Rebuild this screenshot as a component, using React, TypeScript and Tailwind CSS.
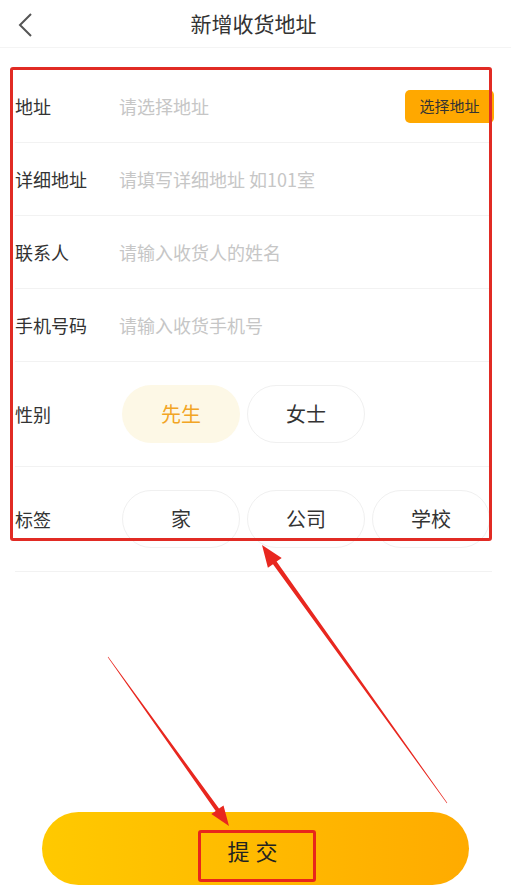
import type { ReactNode } from 'react';

const font = { fontFamily: '"Noto Sans CJK SC", "Noto Sans", sans-serif' };

// Tapered annotation arrow: thin at the tail, wide near the head.
function arrowPoints(tx: number, ty: number, hx: number, hy: number, tail: number, neck: number, headW: number, headL: number) {
  const dx = hx - tx;
  const dy = hy - ty;
  const len = Math.hypot(dx, dy);
  const ux = dx / len;
  const uy = dy / len;
  const nx = -uy;
  const ny = ux;
  const bx = hx - ux * headL;
  const by = hy - uy * headL;
  const pts = [
    [tx + (nx * tail) / 2, ty + (ny * tail) / 2],
    [bx + (nx * neck) / 2, by + (ny * neck) / 2],
    [bx + (nx * headW) / 2, by + (ny * headW) / 2],
    [hx, hy],
    [bx - (nx * headW) / 2, by - (ny * headW) / 2],
    [bx - (nx * neck) / 2, by - (ny * neck) / 2],
    [tx - (nx * tail) / 2, ty - (ny * tail) / 2],
  ];
  return pts.map((p) => p.map((v) => v.toFixed(1)).join(',')).join(' ');
}

function Row({ label, children, tall }: { label: string; children: ReactNode; tall?: boolean }) {
  return (
    <div className={`flex items-center border-b border-[#f2f2f2] ${tall ? 'h-[105px]' : 'h-[73px]'}`}>
      <div className="w-[104px] shrink-0 text-[18px] text-[#333]">{label}</div>
      {children}
    </div>
  );
}

function Placeholder({ text }: { text: string }) {
  return <div className="flex-1 text-[18px] text-[#c6c6c6]">{text}</div>;
}

function Chip({ text, active }: { text: string; active?: boolean }) {
  return (
    <div
      className={`flex h-[58px] w-[118px] items-center justify-center rounded-full text-[20px] ${
        active ? 'bg-[#fdf8e6] text-[#f2a524]' : 'border border-[#f0f0f0] bg-white text-[#333]'
      }`}
    >
      {text}
    </div>
  );
}

export default function App() {
  return (
    <div className="relative flex h-[895px] w-[511px] flex-col overflow-hidden bg-white" style={font}>
      {/* Header */}
      <div className="relative flex h-[48px] shrink-0 items-center justify-center border-b border-[#f4f4f4]">
        <svg className="absolute left-[16px] top-[12px]" width="20" height="26" viewBox="0 0 20 26">
          <path d="M15 2 L4 13 L15 24" fill="none" stroke="#555" strokeWidth="2" />
        </svg>
        <span className="pr-[4px] text-[21px] text-[#333]">新增收货地址</span>
      </div>

      {/* Form */}
      <div className="ml-[15px] mr-[19px] pt-[22px]">
        <Row label="地址">
          <Placeholder text="请选择地址" />
          <div className="-mr-[2px] flex h-[33px] w-[89px] items-center justify-center rounded-[5px] bg-[#ffa800] text-[15px] text-[#333]">
            选择地址
          </div>
        </Row>
        <Row label="详细地址">
          <Placeholder text="请填写详细地址 如101室" />
        </Row>
        <Row label="联系人">
          <Placeholder text="请输入收货人的姓名" />
        </Row>
        <Row label="手机号码">
          <Placeholder text="请输入收货手机号" />
        </Row>
        <Row label="性别" tall>
          <div className="ml-[3px] flex gap-[7px]">
            <Chip text="先生" active />
            <Chip text="女士" />
          </div>
        </Row>
        <Row label="标签" tall>
          <div className="ml-[3px] flex gap-[7px]">
            <Chip text="家" />
            <Chip text="公司" />
            <Chip text="学校" />
          </div>
        </Row>
      </div>

      <div className="flex-1" />

      {/* Submit */}
      <div className="mx-[42px] mb-[10px] flex h-[73px] items-center justify-center rounded-full bg-gradient-to-r from-[#ffc900] to-[#ffab00]">
        <span className="pt-[4px] text-[22px] tracking-[6px] text-[#222]">提交</span>
      </div>

      {/* Annotations */}
      <div className="pointer-events-none absolute left-[10px] top-[67px] h-[474px] w-[482px] rounded-[3px] border-[3px] border-[#e12b24]" />
      <div className="pointer-events-none absolute left-[198px] top-[830px] h-[52px] w-[118px] rounded-[3px] border-[3px] border-[#e8261c]" />
      <svg className="pointer-events-none absolute left-0 top-0" width="511" height="895" viewBox="0 0 511 895">
        <polygon points={arrowPoints(447, 803, 262, 545, 0.6, 4.5, 17, 22)} fill="#e8271f" />
        <polygon points={arrowPoints(108, 657, 229, 826, 0.6, 4, 15, 20)} fill="#e8271f" />
      </svg>
    </div>
  );
}
